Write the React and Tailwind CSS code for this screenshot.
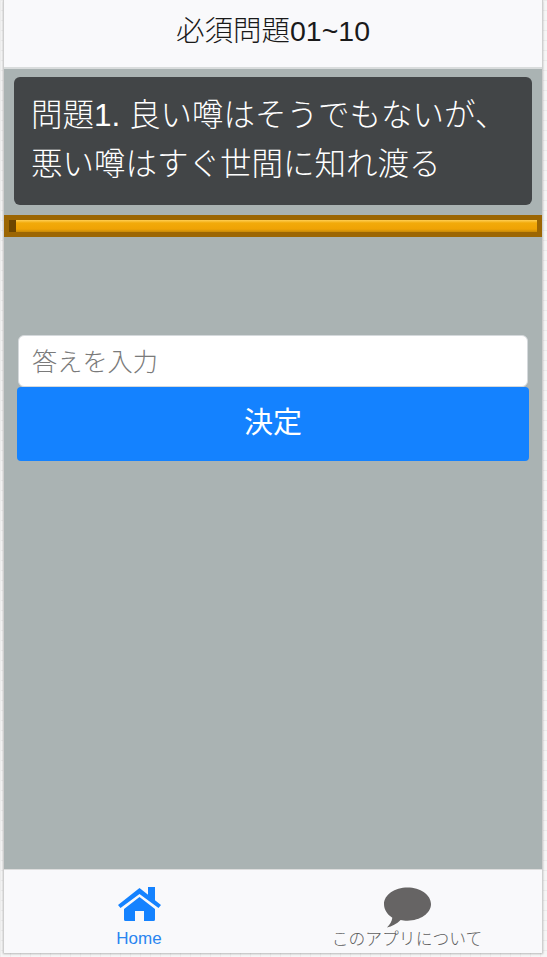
export default function App() {
  const font = { fontFamily: '"Liberation Sans", "Noto Sans CJK JP", sans-serif' };
  return (
    <div style={font} className="w-[547px] h-[957px] overflow-hidden bg-[#f6f6f6] bg-[linear-gradient(#ececec_1px,transparent_1px),linear-gradient(90deg,#ececec_1px,transparent_1px)] bg-[length:10px_10px] pl-[3px] pr-[4px] pb-[4px]">
      <div className="h-full flex flex-col border-x border-[#cfcfcf] shadow-[0_1px_2px_rgba(0,0,0,0.25)]">
        <header className="h-[69px] shrink-0 flex items-center justify-center bg-[#f9f9fb] border-b-2 border-[#d9dcdc] text-[28.5px] font-light text-[#1a1a1a] pb-[5px]">
          必須問題01~10
        </header>
        <main className="flex-1 bg-[#aab3b3] flex flex-col pt-[8px]">
          <div className="mx-[10px] h-[128px] rounded-[6px] bg-[#424547] px-[17px] pt-[14px] text-[31.5px] leading-[49px] font-light text-white">
            問題1. 良い噂はそうでもないが、<br />悪い噂はすぐ世間に知れ渡る
          </div>
          <div className="mt-[10px] h-[22px] bg-[#9c6603] p-[5px] flex">
            <div className="w-[7px] bg-[#6d4600]" />
            <div className="flex-1 bg-[linear-gradient(#ffcf55_0%,#f2aa0a_25%,#efa305_75%,#c98a08_100%)]" />
          </div>
          <div className="mt-[98px] mx-[14px] h-[52px] shrink-0 bg-white rounded-[6px] border border-[#d5d9dc] px-[13px] pt-[4px] flex items-center text-[25.2px] font-light text-[#7a7a7a]">
            答えを入力
          </div>
          <button className="mx-[13px] h-[74px] bg-[#1482ff] rounded-[4px] text-white text-[29px] font-normal">
            決定
          </button>
        </main>
        <nav className="h-[84px] shrink-0 bg-[#f9f9fb] border-t border-[#dddddd] flex">
          <div className="w-[270px] flex flex-col items-center pt-[17px]">
            <svg width="43" height="35" viewBox="0 0 43 35" fill="#1482ff">
              <path d="M30 0h7v14l-7-5.500z" />
              <path d="M21.500 1 43 18l-2.500 3-19-14-19 14L0 18z" />
              <path d="M21.500 10 37 22v10.500a1.500 1.500 0 0 1-1.500 1.500H26V24h-9v10H7.500A1.500 1.500 0 0 1 6 32.500V22z" />
            </svg>
            <span className="mt-[7px] text-[17px] leading-[20px] text-[#2a85f0]">Home</span>
          </div>
          <div className="w-[266px] flex flex-col items-center pt-[17px]">
            <svg width="47" height="41" viewBox="0 0 48 41" fill="#666464">
              <path d="M24 0C37 0 48 7.500 48 17S37 34 24 34c-3 0-5-.3-7-.8C13 37 8 40 3 41c3-3 5-6 5.500-10C3 27.500 0 22.500 0 17 0 7.500 11 0 24 0z" />
            </svg>
            <span className="mt-[2px] text-[16.8px] leading-[20px] font-light text-[#5f5f5f]">このアプリについて</span>
          </div>
        </nav>
      </div>
    </div>
  );
}
